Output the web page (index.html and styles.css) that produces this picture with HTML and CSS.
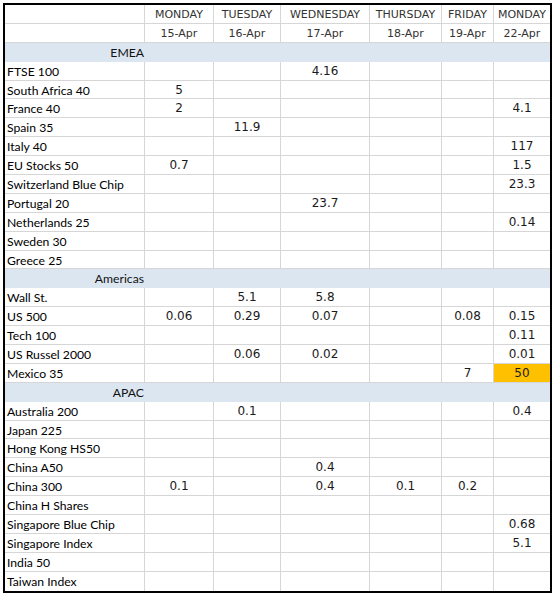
FILE: index.html
```html
<!DOCTYPE html>
<html>
<head>
<meta charset="utf-8">
<link rel="stylesheet" href="styles.css">
</head>
<body>
<div class="sheet">
  <div class="c lab"></div><div class="c hd">MONDAY</div><div class="c hd">TUESDAY</div><div class="c hd">WEDNESDAY</div><div class="c hd">THURSDAY</div><div class="c hd">FRIDAY</div><div class="c hd last">MONDAY</div>
  <div class="c lab"></div><div class="c hd">15-Apr</div><div class="c hd">16-Apr</div><div class="c hd">17-Apr</div><div class="c hd">18-Apr</div><div class="c hd">19-Apr</div><div class="c hd last">22-Apr</div>

  <div class="sec"><span class="sec-t">EMEA</span></div>

  <div class="c lab">FTSE 100</div><div class="c n"></div><div class="c n"></div><div class="c n">4.16</div><div class="c n"></div><div class="c n"></div><div class="c n last"></div>
  <div class="c lab">South Africa 40</div><div class="c n">5</div><div class="c n"></div><div class="c n"></div><div class="c n"></div><div class="c n"></div><div class="c n last"></div>
  <div class="c lab">France 40</div><div class="c n">2</div><div class="c n"></div><div class="c n"></div><div class="c n"></div><div class="c n"></div><div class="c n last">4.1</div>
  <div class="c lab">Spain 35</div><div class="c n"></div><div class="c n">11.9</div><div class="c n"></div><div class="c n"></div><div class="c n"></div><div class="c n last"></div>
  <div class="c lab">Italy 40</div><div class="c n"></div><div class="c n"></div><div class="c n"></div><div class="c n"></div><div class="c n"></div><div class="c n last">117</div>
  <div class="c lab">EU Stocks 50</div><div class="c n">0.7</div><div class="c n"></div><div class="c n"></div><div class="c n"></div><div class="c n"></div><div class="c n last">1.5</div>
  <div class="c lab">Switzerland Blue Chip</div><div class="c n"></div><div class="c n"></div><div class="c n"></div><div class="c n"></div><div class="c n"></div><div class="c n last">23.3</div>
  <div class="c lab">Portugal 20</div><div class="c n"></div><div class="c n"></div><div class="c n">23.7</div><div class="c n"></div><div class="c n"></div><div class="c n last"></div>
  <div class="c lab">Netherlands 25</div><div class="c n"></div><div class="c n"></div><div class="c n"></div><div class="c n"></div><div class="c n"></div><div class="c n last">0.14</div>
  <div class="c lab">Sweden 30</div><div class="c n"></div><div class="c n"></div><div class="c n"></div><div class="c n"></div><div class="c n"></div><div class="c n last"></div>
  <div class="c lab">Greece 25</div><div class="c n"></div><div class="c n"></div><div class="c n"></div><div class="c n"></div><div class="c n"></div><div class="c n last"></div>

  <div class="sec"><span class="sec-t">Americas</span></div>

  <div class="c lab">Wall St.</div><div class="c n"></div><div class="c n">5.1</div><div class="c n">5.8</div><div class="c n"></div><div class="c n"></div><div class="c n last"></div>
  <div class="c lab">US 500</div><div class="c n">0.06</div><div class="c n">0.29</div><div class="c n">0.07</div><div class="c n"></div><div class="c n">0.08</div><div class="c n last">0.15</div>
  <div class="c lab">Tech 100</div><div class="c n"></div><div class="c n"></div><div class="c n"></div><div class="c n"></div><div class="c n"></div><div class="c n last">0.11</div>
  <div class="c lab">US Russel 2000</div><div class="c n"></div><div class="c n">0.06</div><div class="c n">0.02</div><div class="c n"></div><div class="c n"></div><div class="c n last">0.01</div>
  <div class="c lab">Mexico 35</div><div class="c n"></div><div class="c n"></div><div class="c n"></div><div class="c n"></div><div class="c n">7</div><div class="c n last hl">50</div>

  <div class="sec"><span class="sec-t">APAC</span></div>

  <div class="c lab">Australia 200</div><div class="c n"></div><div class="c n">0.1</div><div class="c n"></div><div class="c n"></div><div class="c n"></div><div class="c n last">0.4</div>
  <div class="c lab">Japan 225</div><div class="c n"></div><div class="c n"></div><div class="c n"></div><div class="c n"></div><div class="c n"></div><div class="c n last"></div>
  <div class="c lab">Hong Kong HS50</div><div class="c n"></div><div class="c n"></div><div class="c n"></div><div class="c n"></div><div class="c n"></div><div class="c n last"></div>
  <div class="c lab">China A50</div><div class="c n"></div><div class="c n"></div><div class="c n">0.4</div><div class="c n"></div><div class="c n"></div><div class="c n last"></div>
  <div class="c lab">China 300</div><div class="c n">0.1</div><div class="c n"></div><div class="c n">0.4</div><div class="c n">0.1</div><div class="c n">0.2</div><div class="c n last"></div>
  <div class="c lab">China H Shares</div><div class="c n"></div><div class="c n"></div><div class="c n"></div><div class="c n"></div><div class="c n"></div><div class="c n last"></div>
  <div class="c lab">Singapore Blue Chip</div><div class="c n"></div><div class="c n"></div><div class="c n"></div><div class="c n"></div><div class="c n"></div><div class="c n last">0.68</div>
  <div class="c lab">Singapore Index</div><div class="c n"></div><div class="c n"></div><div class="c n"></div><div class="c n"></div><div class="c n"></div><div class="c n last">5.1</div>
  <div class="c lab">India 50</div><div class="c n"></div><div class="c n"></div><div class="c n"></div><div class="c n"></div><div class="c n"></div><div class="c n last"></div>
  <div class="c lab bot">Taiwan Index</div><div class="c n bot"></div><div class="c n bot"></div><div class="c n bot"></div><div class="c n bot"></div><div class="c n bot"></div><div class="c n last bot"></div>
</div>
</body>
</html>
```

FILE: styles.css
```css
html, body {
  margin: 0;
  padding: 0;
  background: #ffffff;
}

.sheet {
  margin: 3px 0 0 3px;
  width: 545px;
  border: 2px solid #000;
  display: grid;
  grid-template-columns: 140px 69px 67px 89px 72px 52px 56px;
  grid-template-rows: repeat(31, 18.9px);
  background: #fff;
}

.c {
  box-sizing: border-box;
  border-right: 1px solid #d6d6d6;
  border-bottom: 1px solid #d6d6d6;
  white-space: nowrap;
  overflow: hidden;
  color: #111;
}

.c.last {
  border-right: none;
}

.c.bot {
  border-bottom: none;
}

.lab {
  font-family: Lato, "Liberation Sans", sans-serif;
  font-size: 12.2px;
  line-height: 18px;
  padding-top: 1px;
  padding-left: 2px;
  color: #000;
}

.hd, .n {
  font-family: "DejaVu Sans", Verdana, sans-serif;
  line-height: 18px;
  text-align: center;
  color: #1a1a1a;
}

.hd {
  font-size: 11px;
  padding-top: 1px;
  color: #333;
}

.n {
  font-size: 12px;
  padding-top: 0;
}

.hl {
  background: #ffc000;
}

.sec {
  grid-column: 1 / -1;
  background: #dce6f1;
  font-family: Lato, "Liberation Sans", sans-serif;
  font-size: 12.2px;
  line-height: 19.5px;
  color: #111;
}

.sec-t {
  display: block;
  width: 139px;
  text-align: right;
}
```
